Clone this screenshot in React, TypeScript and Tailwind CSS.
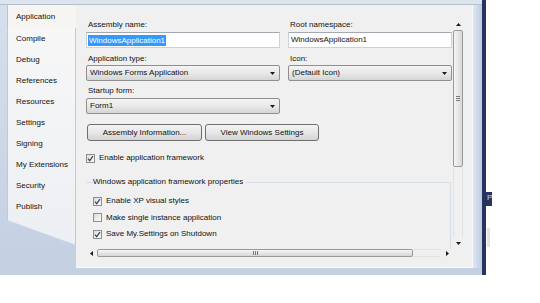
import React from "react";

const tabs = ["Compile", "Debug", "References", "Resources", "Settings", "Signing", "My Extensions", "Security", "Publish"];

type Dir = "up" | "down" | "left" | "right";

const Arrow = ({ dir }: { dir: Dir }) => {
    if (dir == "up" || dir == "down") {
        return (
            <svg width="5" height="3" viewBox="0 0 5 3">
                <path d={dir == "up" ? "M0 3h5L2.5 0z" : "M0 0h5L2.5 3z"} fill="#1a1a1a" />
            </svg>
        );
    }
    return (
        <svg width="3" height="5" viewBox="0 0 3 5">
            <path d={dir == "left" ? "M3 0v5L0 2.5z" : "M0 0v5L3 2.5z"} fill="#1a1a1a" />
        </svg>
    );
};

const Check = ({ checked }: { checked?: boolean }) => (
    <span className="w-[9px] h-[9px] shrink-0 border border-[#8e8f8f] bg-linear-to-br from-[#dcdcdc] to-[#fbfbfb] flex items-center justify-center">
        {checked && (
            <svg width="7" height="7" viewBox="0 0 7 7">
                <path d="M1 3.6 2.7 5.6 6 1.2" stroke="#3c4e64" strokeWidth="1.3" fill="none" />
            </svg>
        )}
    </span>
);

const CheckRow = ({ label, checked }: { label: string; checked?: boolean }) => (
    <div className="h-[12px] flex items-center gap-[4px]">
        <Check checked={checked} />
        <span>{label}</span>
    </div>
);

const Select = ({ value }: { value: string }) => (
    <div className="h-[16px] flex items-center justify-between pl-[3px] pr-[4px] rounded-[2px] border border-[#8f8f8f] bg-linear-to-b from-[#f4f4f4] via-[#e9e9e9] to-[#d5d5d5]">
        <span>{value}</span>
        <Arrow dir="down" />
    </div>
);

const Button = ({ label, className }: { label: string; className: string }) => (
    <div className={"h-[17px] flex items-center justify-center rounded-[3px] border border-[#707070] bg-linear-to-b from-[#f4f4f4] via-[#e7e7e7] to-[#d3d3d3] " + className}>
        {label}
    </div>
);

const TabList = () => (
    <div className="w-[69px] h-[240px] shrink-0 flex flex-col [clip-path:polygon(0_0,100%_0,100%_100%,0_215px)]">
        <div className="h-[23px] shrink-0 pl-[8px] flex items-center bg-[#f6f5f1] border-l border-[#b9c3d1]">
            Application
        </div>
        <div className="flex-1 flex flex-col bg-linear-to-b from-[#f7f7f7] to-[#eceff3] border-x border-[#c3c9d2]">
            {tabs.map((t) => (
                <div key={t} className="h-[21px] shrink-0 pl-[8px] flex items-center">
                    {t}
                </div>
            ))}
        </div>
    </div>
);

const VScroll = () => (
    <div className="w-[10px] h-[230px] shrink-0 flex flex-col">
        <div className="h-[11px] shrink-0 flex items-center justify-center">
            <Arrow dir="up" />
        </div>
        <div className="h-[137px] shrink-0 rounded-[2px] border border-[#9a9a9a] bg-linear-to-r from-[#f6f6f6] to-[#d8d8d8] flex flex-col items-center justify-center gap-[1px]">
            <div className="w-[4px] h-px bg-[#7a7a7a]" />
            <div className="w-[4px] h-px bg-[#7a7a7a]" />
            <div className="w-[4px] h-px bg-[#7a7a7a]" />
        </div>
        <div className="flex-1 border-x border-[#e2e2e2]" />
        <div className="h-[12px] shrink-0 flex items-center justify-center">
            <Arrow dir="down" />
        </div>
    </div>
);

const HScroll = () => (
    <div className="w-[367px] h-[8px] flex items-center">
        <div className="w-[11px] shrink-0 flex justify-center">
            <Arrow dir="left" />
        </div>
        <div className="w-[316px] h-[8px] shrink-0 rounded-[2px] border border-[#9a9a9a] bg-linear-to-b from-[#f6f6f6] to-[#d6d6d6] flex items-center justify-center gap-[1px]">
            <div className="w-px h-[4px] bg-[#7a7a7a]" />
            <div className="w-px h-[4px] bg-[#7a7a7a]" />
            <div className="w-px h-[4px] bg-[#7a7a7a]" />
        </div>
        <div className="flex-1 h-[8px] border-y border-[#e2e2e2]" />
        <div className="w-[12px] shrink-0 flex justify-center">
            <Arrow dir="right" />
        </div>
    </div>
);

const Panel = () => (
    <div className="w-[397px] h-[263px] shrink-0 bg-[#f0f0f0] pl-[10px] pt-[14px] border-r border-b border-[#f7f9fc]">
        <div className="flex">
            <div className="w-[367px] h-[230px] overflow-hidden flex flex-col">
                <div className="flex gap-[8px] h-[12px]">
                    <div className="w-[194px] pl-[2px]">Assembly name:</div>
                    <div className="w-[164px] pl-[2px]">Root namespace:</div>
                </div>
                <div className="flex gap-[8px] mt-[1px]">
                    <div className="w-[194px] h-[16px] bg-white border border-[#cdd2da] border-t-[#a4a9b1] flex items-center pl-[1px]">
                        <span className="bg-[#3399ff] text-white px-[1px] leading-[11px]">WindowsApplication1</span>
                    </div>
                    <div className="w-[164px] h-[16px] bg-white border border-[#cdd2da] border-t-[#a4a9b1] flex items-center pl-[2px]">
                        WindowsApplication1
                    </div>
                </div>
                <div className="flex gap-[8px] h-[12px] mt-[5px]">
                    <div className="w-[194px] pl-[2px]">Application type:</div>
                    <div className="w-[164px] pl-[2px]">Icon:</div>
                </div>
                <div className="flex gap-[8px]">
                    <div className="w-[194px]">
                        <Select value="Windows Forms Application" />
                    </div>
                    <div className="w-[164px]">
                        <Select value="(Default Icon)" />
                    </div>
                </div>
                <div className="h-[12px] mt-[4px] pl-[2px]">Startup form:</div>
                <div className="w-[194px] mt-[1px]">
                    <Select value="Form1" />
                </div>
                <div className="flex gap-[3px] mt-[10px] ml-[1px]">
                    <Button label="Assembly Information..." className="w-[115px]" />
                    <Button label="View Windows Settings" className="w-[114px]" />
                </div>
                <div className="mt-[11px]">
                    <CheckRow label="Enable application framework" checked />
                </div>
                <fieldset className="mt-[12px] w-[365px] shrink-0 border-t border-r border-[#d5dfe5] pl-[7px]">
                    <legend className="pr-[3px] leading-[12px]">Windows application framework properties</legend>
                    <div className="flex flex-col gap-[4.5px] mt-[7px] pb-[20px]">
                        <CheckRow label="Enable XP visual styles" checked />
                        <CheckRow label="Make single instance application" />
                        <CheckRow label="Save My.Settings on Shutdown" checked />
                    </div>
                </fieldset>
            </div>
            <VScroll />
        </div>
        <HScroll />
    </div>
);

export default function App() {
    return (
        <div className="w-[540px] h-[303px] bg-white overflow-hidden font-['Liberation_Sans',Arial,sans-serif] text-[8px] leading-[12px] text-[#111]">
            <div className="flex h-[275px]">
                <div className="w-[482px] h-full shrink-0 flex flex-col bg-linear-to-b from-[#d6e0ed] to-[#c3d0e2]">
                    <div className="h-[5px] shrink-0 bg-[#dde4ed] border-b border-[#b5c0cf]" />
                    <div className="flex flex-1 pl-[7px]">
                        <TabList />
                        <Panel />
                        <div className="w-[9px] h-[263px] bg-linear-to-r from-[#dfe7f2] to-[#bccde3]" />
                    </div>
                </div>
                <div className="w-[4px] h-full shrink-0 bg-[#27345f]" />
                <div className="flex-1 flex flex-col">
                    <div className="mt-[192px] w-[6px] h-[14px] bg-[#27345f] text-[#cfd6ea] pl-[1px] overflow-hidden">P</div>
                    <div className="mt-[22px] ml-[1px] w-[3px] h-[19px] bg-[#dfe3ea]" />
                </div>
            </div>
        </div>
    );
}
